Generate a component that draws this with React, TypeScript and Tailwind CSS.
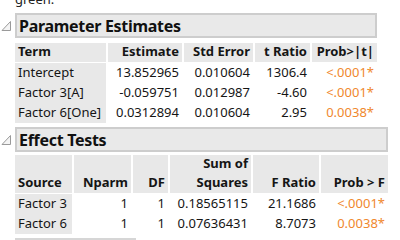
import React from 'react';

type Col = { label: React.ReactNode; w: string };

const paramCols: Col[] = [
  { label: 'Term', w: 'w-[91px]' },
  { label: 'Estimate', w: 'w-[74px]' },
  { label: 'Std Error', w: 'w-[69px]' },
  { label: 't Ratio', w: 'w-[55px]' },
  { label: 'Prob>|t|', w: 'w-[65px]' },
];

const paramRows = [
  ['Intercept', '13.852965', '0.010604', '1306.4', '<.0001*'],
  ['Factor 3[A]', '-0.059751', '0.012987', '-4.60', '<.0001*'],
  ['Factor 6[One]', '0.0312894', '0.010604', '2.95', '0.0038*'],
];

const effectCols: Col[] = [
  { label: 'Source', w: 'w-[57px]' },
  { label: 'Nparm', w: 'w-[57px]' },
  { label: 'DF', w: 'w-[35px]' },
  { label: <>Sum of<br />Squares</>, w: 'w-[81px]' },
  { label: 'F Ratio', w: 'w-[66px]' },
  { label: 'Prob > F', w: 'w-[67px]' },
];

const effectRows = [
  ['Factor 3', '1', '1', '0.18565115', '21.1686', '<.0001*'],
  ['Factor 6', '1', '1', '0.07636431', '8.7073', '0.0038*'],
];

function Disclosure() {
  return (
    <svg width="11" height="12" viewBox="0 0 11 12" className="shrink-0">
      <path d="M9.5 1.5 L9.5 10.5 L1 10.5 Z" fill="#f4f4f4" stroke="#9a9a9a" strokeWidth="1" />
    </svg>
  );
}

function OutlineHeader({ title, width }: { title: string; width: string }) {
  return (
    <div className="flex items-center">
      <div className="w-[15px] pl-[1px]">
        <Disclosure />
      </div>
      <div className={`${width} h-[25px] flex items-center border-2 border-[#cdcdcd] bg-[#e9e9e9] pl-[2px]`}>
        <span className="text-[16px] tracking-[-0.3px] font-bold text-[#111] leading-none">{title}</span>
      </div>
    </div>
  );
}

function DataTable({ cols, rows, headH }: { cols: Col[]; rows: string[][]; headH: string }) {
  return (
    <div className="ml-[15px] flex flex-col gap-[1px]">
      <div className={`flex gap-[2px] ${headH}`}>
        {cols.map((c, i) => (
          <div
            key={i}
            className={`${c.w} bg-[#e8e8e8] flex items-end font-bold leading-[19px] pb-[1px] px-[3px] ${i === 0 ? 'justify-start' : 'justify-end text-right'}`}
          >
            <span>{c.label}</span>
          </div>
        ))}
      </div>
      <div className="flex flex-col">
        {rows.map((r, ri) => (
          <div key={ri} className="flex gap-[2px] h-[20px]">
            {r.map((v, ci) => (
              <div
                key={ci}
                className={`${cols[ci].w} flex items-center px-[3px] ${ci === 0 ? 'bg-[#e8e8e8] justify-start' : 'justify-end'} ${ci === r.length - 1 ? 'text-[#f0882d]' : ''}`}
              >
                {v}
              </div>
            ))}
          </div>
        ))}
      </div>
    </div>
  );
}

export default function App() {
  return (
    <div className="w-[400px] h-[240px] overflow-hidden bg-white text-[13px] text-[#151515] font-['Noto_Sans','Open_Sans',sans-serif]">
      <div className="h-[13px] overflow-hidden flex flex-col justify-end">
        <div className="ml-[15px] mb-[5px] leading-[18px] text-[#222]">green.</div>
      </div>
      <OutlineHeader title="Parameter Estimates" width="w-[362px]" />
      <div className="mt-[5px]">
        <DataTable cols={paramCols} rows={paramRows} headH="h-[19px]" />
      </div>
      <div className="mt-[4px]">
        <OutlineHeader title="Effect Tests" width="w-[373px]" />
      </div>
      <div className="mt-[3px]">
        <DataTable cols={effectCols} rows={effectRows} headH="h-[38px]" />
      </div>
      <div className="ml-[15px] mt-[4px] w-[121px] h-[10px] border-2 border-[#d6d6d6] bg-[#f4f4f4]" />
    </div>
  );
}
